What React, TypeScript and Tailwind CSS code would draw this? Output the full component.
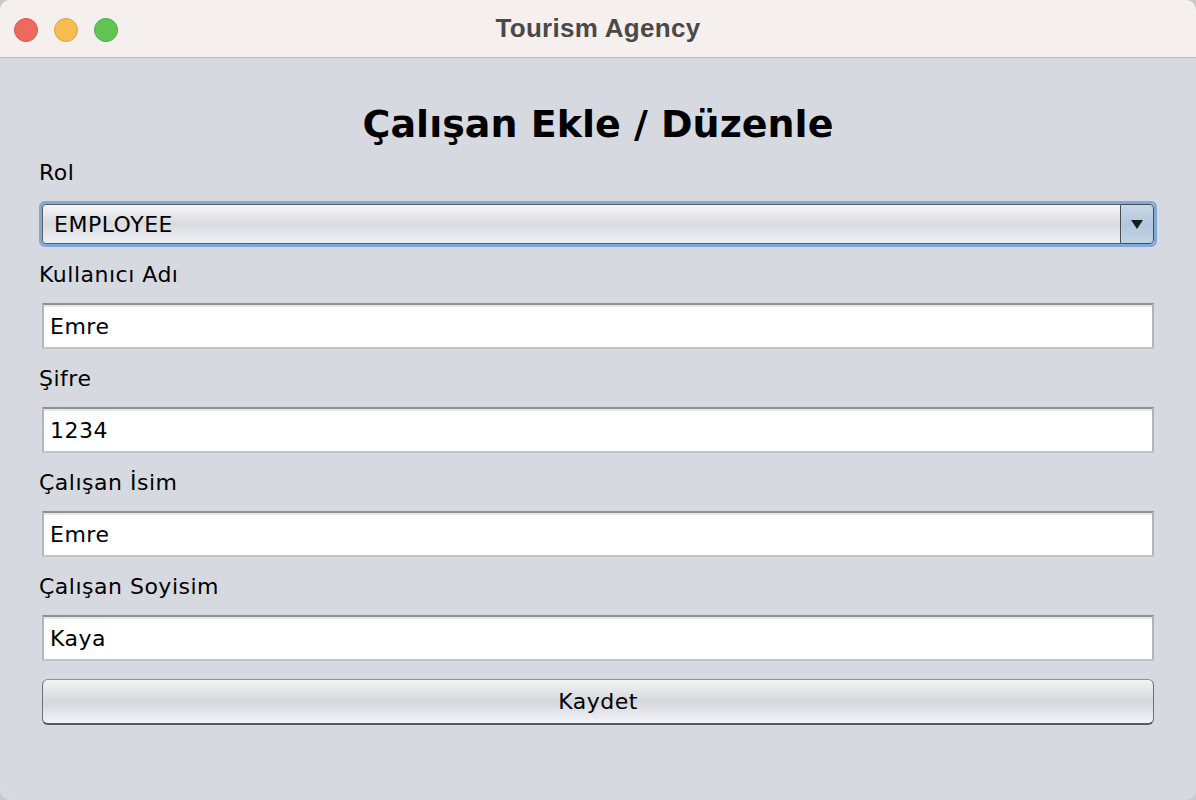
const fields = [
	{ label: "Kullanıcı Adı", value: "Emre" },
	{ label: "Şifre", value: "1234" },
	{ label: "Çalışan İsim", value: "Emre" },
	{ label: "Çalışan Soyisim", value: "Kaya" },
];

const font = { fontFamily: '"DejaVu Sans", "Liberation Sans", sans-serif' };

const TextField = ({ value }: { value: string }) => (
	<div className="mx-[3px] h-[46px] bg-white border-2 border-t-[#8e9194] border-x-[#b5b5b5] border-b-[#c4c4c4] flex items-center px-[6px] shadow-[inset_0_2px_0_#e6e6e6]">
		<span className="text-[22px] tracking-[0.5px] text-black">{value}</span>
	</div>
);

export default function App() {
	return (
		<div className="w-[1196px] h-[800px] bg-[#c9cacd]" style={font}>
			<div className="w-full h-full rounded-[10px] overflow-hidden bg-[#d6d9e0] flex flex-col">
				<div className="h-[58px] shrink-0 bg-[#f5f0ee] border-b border-[#bdbcbc] relative flex items-center justify-center">
					<div className="absolute left-[14px] top-[18px] flex gap-[16px]">
						<span className="w-[24px] h-[24px] rounded-full bg-[#ee6a5f] border border-[#d8574d]" />
						<span className="w-[24px] h-[24px] rounded-full bg-[#f6be50] border border-[#dea33a]" />
						<span className="w-[24px] h-[24px] rounded-full bg-[#61c554] border border-[#4eaa40]" />
					</div>
					<span className="text-[26px] tracking-[0.3px] font-bold text-[#4b4948]" style={{ fontFamily: '"Liberation Sans", Arial, sans-serif' }}>
						Tourism Agency
					</span>
				</div>

				<div className="px-[39px] pt-[41px]">
					<h1 className="text-center text-[38px] font-bold text-black leading-[50px]">Çalışan Ekle / Düzenle</h1>

					<p className="text-[22px] tracking-[0.5px] text-black leading-[30px] mt-[9px]">Rol</p>
					<div className="mt-[13px] h-[46px] rounded-[6px] border-[3px] border-[#7fa9d7] flex overflow-hidden">
						<div className="flex-1 flex items-center px-[11px] bg-gradient-to-b from-[#f6f6f8] via-[#d9dbe0] to-[#eef0f7] border-y border-l border-[#5b5e63] rounded-l-[4px]">
							<span className="text-[22px] tracking-[0.5px] text-black">EMPLOYEE</span>
						</div>
						<div className="w-[34px] flex items-center justify-center bg-gradient-to-b from-[#c7d6e6] via-[#b3c7dc] to-[#c2d3e5] border border-[#4a4e55] rounded-r-[4px]">
							<svg width="14" height="11" viewBox="0 0 14 11">
								<path d="M1 1 L13 1 L7 10 Z" fill="#1c1c1c" />
							</svg>
						</div>
					</div>

					{fields.map((f, i) => (
						<div key={f.label}>
							<p className={i === 0 ? "text-[22px] tracking-[0.5px] text-black leading-[30px] mt-[13px]" : "text-[22px] tracking-[0.5px] text-black leading-[30px] mt-[15px]"}>
								{f.label}
							</p>
							<div className="mt-[13px]">
								<TextField value={f.value} />
							</div>
						</div>
					))}

					<button className="mt-[18px] mx-[3px] w-[calc(100%-6px)] h-[46px] rounded-[6px] border border-t-[#8e9194] border-x-[#6b6e73] border-b-2 border-b-[#55585d] bg-gradient-to-b from-[#f4f4f6] via-[#d5d7dc] to-[#f2f4fb] flex items-center justify-center">
						<span className="text-[22px] tracking-[0.5px] text-black">Kaydet</span>
					</button>
				</div>
			</div>
		</div>
	);
}
